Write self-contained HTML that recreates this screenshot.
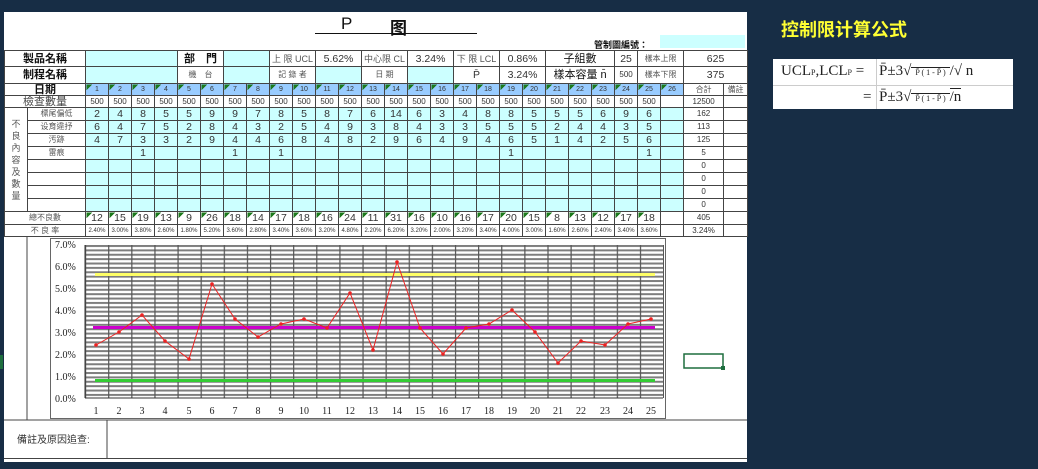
<!DOCTYPE html>
<html><head><meta charset="utf-8">
<style>
*{margin:0;padding:0;box-sizing:border-box}
body{width:1038px;height:469px;background:#172d45;position:relative;overflow:hidden;font-family:"Liberation Sans","Noto Sans CJK TC",sans-serif;color:#222}
#sheet{position:absolute;left:4px;top:12px;width:743px;height:450px;background:#fff}
table{position:absolute;left:4px;top:50px;border-collapse:collapse;table-layout:fixed;width:743px}
td{border:1px solid #444;text-align:center;font-size:10.5px;line-height:10px;padding:0;overflow:hidden;white-space:nowrap;color:#333}
.c{background:#ccffff}
.b{background:#99ccff;font-size:7px}
.h{font-weight:bold;font-size:11px;color:#111}
.s{font-size:8px;color:#555}
.p{font-size:6px}
.t{background-image:linear-gradient(135deg,#1d7a1d 4px,transparent 4px)}
.b.t{background-color:#99ccff}
tr.r16 td{height:16px}
tr.r17 td{height:17px}
tr.r12 td{height:12px}
tr.r13 td{height:13px}
.v{font-size:9px;line-height:12px;white-space:normal;color:#555}
</style></head><body>
<div id="sheet"></div>
<div style="position:absolute;left:341px;top:14px;font-size:17px;color:#111">P</div>
<div style="position:absolute;left:390px;top:14px;font-size:17px;font-weight:bold;color:#111">图</div>
<div style="position:absolute;left:315px;top:33px;width:162px;height:1px;background:#111"></div>
<div style="position:absolute;left:594px;top:38px;font-size:9px;font-weight:bold;color:#111">管制圖編號：</div>
<div style="position:absolute;left:660px;top:35px;width:85px;height:13px;background:#ccffff"></div>

<table>
<colgroup><col style="width:23px"><col style="width:58px">
<col span="26" style="width:23px"><col style="width:40px"><col style="width:24px"></colgroup>
<tr class="r16"><td colspan="2" class="h">製品名稱</td><td colspan="4" class="c"></td><td colspan="2" class="h">部　門</td><td colspan="2" class="c"></td><td colspan="2" class="s" style="font-size:9px">上 限 UCL</td><td colspan="2">5.62%</td><td colspan="2" class="s" style="font-size:9px">中心限 CL</td><td colspan="2">3.24%</td><td colspan="2" class="s" style="font-size:9px">下 限 LCL</td><td colspan="2">0.86%</td><td colspan="3" style="font-size:11px;color:#111">子組數</td><td>25</td><td colspan="2" class="s">樣本上限</td><td colspan="2">625</td></tr>
<tr class="r17"><td colspan="2" class="h">制程名稱</td><td colspan="4" class="c"></td><td colspan="2" class="s">機　台</td><td colspan="2" class="c"></td><td colspan="2" class="s">記 錄 者</td><td colspan="2" class="c"></td><td colspan="2" class="s">日 期</td><td colspan="2" class="c"></td><td colspan="2">P̄</td><td colspan="2">3.24%</td><td colspan="3" style="font-size:11px;color:#111">樣本容量 n̄</td><td style="font-size:8px">500</td><td colspan="2" class="s">樣本下限</td><td colspan="2">375</td></tr>
<tr class="r12"><td colspan="2" class="h">日期</td><td class="b t">1</td><td class="b t">2</td><td class="b t">3</td><td class="b t">4</td><td class="b t">5</td><td class="b t">6</td><td class="b t">7</td><td class="b t">8</td><td class="b t">9</td><td class="b t">10</td><td class="b t">11</td><td class="b t">12</td><td class="b t">13</td><td class="b t">14</td><td class="b t">15</td><td class="b t">16</td><td class="b t">17</td><td class="b t">18</td><td class="b t">19</td><td class="b t">20</td><td class="b t">21</td><td class="b t">22</td><td class="b t">23</td><td class="b t">24</td><td class="b t">25</td><td class="b t">26</td><td class="s">合計</td><td class="s">備註</td></tr>
<tr class="r12"><td colspan="2" style="font-size:11px;color:#444">檢查數量</td><td style="font-size:8px">500</td><td style="font-size:8px">500</td><td style="font-size:8px">500</td><td style="font-size:8px">500</td><td style="font-size:8px">500</td><td style="font-size:8px">500</td><td style="font-size:8px">500</td><td style="font-size:8px">500</td><td style="font-size:8px">500</td><td style="font-size:8px">500</td><td style="font-size:8px">500</td><td style="font-size:8px">500</td><td style="font-size:8px">500</td><td style="font-size:8px">500</td><td style="font-size:8px">500</td><td style="font-size:8px">500</td><td style="font-size:8px">500</td><td style="font-size:8px">500</td><td style="font-size:8px">500</td><td style="font-size:8px">500</td><td style="font-size:8px">500</td><td style="font-size:8px">500</td><td style="font-size:8px">500</td><td style="font-size:8px">500</td><td style="font-size:8px">500</td><td></td><td style="font-size:8px">12500</td><td></td></tr>
<tr class="r13"><td rowspan="8" class="v">不<br>良<br>內<br>容<br>及<br>數<br>量</td><td class="s">標尾偏低</td><td class="c">2</td><td class="c">4</td><td class="c">8</td><td class="c">5</td><td class="c">5</td><td class="c">9</td><td class="c">9</td><td class="c">7</td><td class="c">8</td><td class="c">5</td><td class="c">8</td><td class="c">7</td><td class="c">6</td><td class="c">14</td><td class="c">6</td><td class="c">3</td><td class="c">4</td><td class="c">8</td><td class="c">8</td><td class="c">5</td><td class="c">5</td><td class="c">5</td><td class="c">6</td><td class="c">9</td><td class="c">6</td><td class="c"></td><td style="font-size:8px">162</td><td></td></tr>
<tr class="r13"><td class="s">设育違抒</td><td class="c">6</td><td class="c">4</td><td class="c">7</td><td class="c">5</td><td class="c">2</td><td class="c">8</td><td class="c">4</td><td class="c">3</td><td class="c">2</td><td class="c">5</td><td class="c">4</td><td class="c">9</td><td class="c">3</td><td class="c">8</td><td class="c">4</td><td class="c">3</td><td class="c">3</td><td class="c">5</td><td class="c">5</td><td class="c">5</td><td class="c">2</td><td class="c">4</td><td class="c">4</td><td class="c">3</td><td class="c">5</td><td class="c"></td><td style="font-size:8px">113</td><td></td></tr>
<tr class="r13"><td class="s">汚跡</td><td class="c">4</td><td class="c">7</td><td class="c">3</td><td class="c">3</td><td class="c">2</td><td class="c">9</td><td class="c">4</td><td class="c">4</td><td class="c">6</td><td class="c">8</td><td class="c">4</td><td class="c">8</td><td class="c">2</td><td class="c">9</td><td class="c">6</td><td class="c">4</td><td class="c">9</td><td class="c">4</td><td class="c">6</td><td class="c">5</td><td class="c">1</td><td class="c">4</td><td class="c">2</td><td class="c">5</td><td class="c">6</td><td class="c"></td><td style="font-size:8px">125</td><td></td></tr>
<tr class="r13"><td class="s">雷痕</td><td class="c"></td><td class="c"></td><td class="c">1</td><td class="c"></td><td class="c"></td><td class="c"></td><td class="c">1</td><td class="c"></td><td class="c">1</td><td class="c"></td><td class="c"></td><td class="c"></td><td class="c"></td><td class="c"></td><td class="c"></td><td class="c"></td><td class="c"></td><td class="c"></td><td class="c">1</td><td class="c"></td><td class="c"></td><td class="c"></td><td class="c"></td><td class="c"></td><td class="c">1</td><td class="c"></td><td style="font-size:8px">5</td><td></td></tr>
<tr class="r13"><td></td><td class="c"></td><td class="c"></td><td class="c"></td><td class="c"></td><td class="c"></td><td class="c"></td><td class="c"></td><td class="c"></td><td class="c"></td><td class="c"></td><td class="c"></td><td class="c"></td><td class="c"></td><td class="c"></td><td class="c"></td><td class="c"></td><td class="c"></td><td class="c"></td><td class="c"></td><td class="c"></td><td class="c"></td><td class="c"></td><td class="c"></td><td class="c"></td><td class="c"></td><td class="c"></td><td style="font-size:8px">0</td><td></td></tr>
<tr class="r13"><td></td><td class="c"></td><td class="c"></td><td class="c"></td><td class="c"></td><td class="c"></td><td class="c"></td><td class="c"></td><td class="c"></td><td class="c"></td><td class="c"></td><td class="c"></td><td class="c"></td><td class="c"></td><td class="c"></td><td class="c"></td><td class="c"></td><td class="c"></td><td class="c"></td><td class="c"></td><td class="c"></td><td class="c"></td><td class="c"></td><td class="c"></td><td class="c"></td><td class="c"></td><td class="c"></td><td style="font-size:8px">0</td><td></td></tr>
<tr class="r13"><td></td><td class="c"></td><td class="c"></td><td class="c"></td><td class="c"></td><td class="c"></td><td class="c"></td><td class="c"></td><td class="c"></td><td class="c"></td><td class="c"></td><td class="c"></td><td class="c"></td><td class="c"></td><td class="c"></td><td class="c"></td><td class="c"></td><td class="c"></td><td class="c"></td><td class="c"></td><td class="c"></td><td class="c"></td><td class="c"></td><td class="c"></td><td class="c"></td><td class="c"></td><td class="c"></td><td style="font-size:8px">0</td><td></td></tr>
<tr class="r13"><td></td><td class="c"></td><td class="c"></td><td class="c"></td><td class="c"></td><td class="c"></td><td class="c"></td><td class="c"></td><td class="c"></td><td class="c"></td><td class="c"></td><td class="c"></td><td class="c"></td><td class="c"></td><td class="c"></td><td class="c"></td><td class="c"></td><td class="c"></td><td class="c"></td><td class="c"></td><td class="c"></td><td class="c"></td><td class="c"></td><td class="c"></td><td class="c"></td><td class="c"></td><td class="c"></td><td style="font-size:8px">0</td><td></td></tr>
<tr class="r13"><td colspan="2" class="s">總不良數</td><td class="t">12</td><td class="t">15</td><td class="t">19</td><td class="t">13</td><td class="t">9</td><td class="t">26</td><td class="t">18</td><td class="t">14</td><td class="t">17</td><td class="t">18</td><td class="t">16</td><td class="t">24</td><td class="t">11</td><td class="t">31</td><td class="t">16</td><td class="t">10</td><td class="t">16</td><td class="t">17</td><td class="t">20</td><td class="t">15</td><td class="t">8</td><td class="t">13</td><td class="t">12</td><td class="t">17</td><td class="t">18</td><td></td><td style="font-size:8px">405</td><td></td></tr>
<tr class="r12"><td colspan="2" class="s">不 良 率</td><td class="p">2.40%</td><td class="p">3.00%</td><td class="p">3.80%</td><td class="p">2.60%</td><td class="p">1.80%</td><td class="p">5.20%</td><td class="p">3.60%</td><td class="p">2.80%</td><td class="p">3.40%</td><td class="p">3.60%</td><td class="p">3.20%</td><td class="p">4.80%</td><td class="p">2.20%</td><td class="p">6.20%</td><td class="p">3.20%</td><td class="p">2.00%</td><td class="p">3.20%</td><td class="p">3.40%</td><td class="p">4.00%</td><td class="p">3.00%</td><td class="p">1.60%</td><td class="p">2.60%</td><td class="p">2.40%</td><td class="p">3.40%</td><td class="p">3.60%</td><td></td><td style="font-size:8px">3.24%</td><td></td></tr>
</table>

<svg style="position:absolute;left:0;top:0" width="1038" height="469" viewBox="0 0 1038 469">
<defs>
<pattern id="hg" x="0" y="245" width="10" height="4.38" patternUnits="userSpaceOnUse"><rect x="0" y="0" width="10" height="2" fill="#7e7e7e"/></pattern>
<pattern id="vg" x="85" y="0" width="23.12" height="10" patternUnits="userSpaceOnUse"><rect x="0" y="0" width="1.2" height="10" fill="#555"/></pattern>
</defs>
<line x1="27" y1="237" x2="27" y2="420" stroke="#444"/>
<rect x="50.5" y="238.5" width="615" height="180" fill="#fff" stroke="#666"/>
<rect x="85" y="245" width="578" height="153" fill="url(#hg)"/>
<rect x="85" y="245" width="579" height="153" fill="url(#vg)"/>
<line x1="85" y1="398" x2="663" y2="398" stroke="#333"/>
<line x1="85" y1="245" x2="85" y2="398" stroke="#333"/>
<g font-family="Liberation Serif,serif" font-size="10" fill="#222">
<text x="55" y="248">7.0%</text><text x="55" y="270">6.0%</text><text x="55" y="292">5.0%</text><text x="55" y="314">4.0%</text><text x="55" y="336">3.0%</text><text x="55" y="358">2.0%</text><text x="55" y="380">1.0%</text><text x="55" y="402">0.0%</text>
</g>
<g font-family="Liberation Serif,serif" font-size="10" fill="#222" text-anchor="middle">
<text x="96" y="414">1</text><text x="119" y="414">2</text><text x="142" y="414">3</text><text x="165" y="414">4</text><text x="189" y="414">5</text><text x="212" y="414">6</text><text x="235" y="414">7</text><text x="258" y="414">8</text><text x="281" y="414">9</text><text x="304" y="414">10</text><text x="327" y="414">11</text><text x="350" y="414">12</text><text x="373" y="414">13</text><text x="397" y="414">14</text><text x="420" y="414">15</text><text x="443" y="414">16</text><text x="466" y="414">17</text><text x="489" y="414">18</text><text x="512" y="414">19</text><text x="535" y="414">20</text><text x="558" y="414">21</text><text x="581" y="414">22</text><text x="605" y="414">23</text><text x="628" y="414">24</text><text x="651" y="414">25</text>
</g>
<rect x="95" y="273" width="560" height="3" fill="#ffff66"/>
<rect x="93" y="326" width="562" height="3" fill="#cc00cc"/>
<rect x="95" y="379" width="560" height="3" fill="#33cc33"/>
<polyline fill="none" stroke="#ee2222" stroke-width="1" points="96,345 119,332 142,315 165,341 189,359 212,284 235,319 258,337 281,324 304,319 327,328 350,293 373,350 397,262 420,328 443,354 466,328 489,324 512,310 535,332 558,363 581,341 605,345 628,324 651,319"/>
<g fill="#ee2222">
<circle cx="96" cy="345" r="1.8"/><circle cx="119" cy="332" r="1.8"/><circle cx="142" cy="315" r="1.8"/><circle cx="165" cy="341" r="1.8"/><circle cx="189" cy="359" r="1.8"/><circle cx="212" cy="284" r="1.8"/><circle cx="235" cy="319" r="1.8"/><circle cx="258" cy="337" r="1.8"/><circle cx="281" cy="324" r="1.8"/><circle cx="304" cy="319" r="1.8"/><circle cx="327" cy="328" r="1.8"/><circle cx="350" cy="293" r="1.8"/><circle cx="373" cy="350" r="1.8"/><circle cx="397" cy="262" r="1.8"/><circle cx="420" cy="328" r="1.8"/><circle cx="443" cy="354" r="1.8"/><circle cx="466" cy="328" r="1.8"/><circle cx="489" cy="324" r="1.8"/><circle cx="512" cy="310" r="1.8"/><circle cx="535" cy="332" r="1.8"/><circle cx="558" cy="363" r="1.8"/><circle cx="581" cy="341" r="1.8"/><circle cx="605" cy="345" r="1.8"/><circle cx="628" cy="324" r="1.8"/><circle cx="651" cy="319" r="1.8"/>
</g>
<rect x="684" y="354" width="39" height="14" fill="none" stroke="#1e6e3e" stroke-width="1.5"/>
<rect x="721" y="366" width="4" height="4" fill="#1e6e3e"/>
<line x1="4" y1="420" x2="747" y2="420" stroke="#444"/>
<line x1="107" y1="420" x2="107" y2="458" stroke="#444"/>
<line x1="4" y1="458.5" x2="747" y2="458.5" stroke="#444"/>
<text x="17" y="443" font-size="10" fill="#333" font-family="Liberation Sans,Noto Sans CJK TC,sans-serif">備註及原因追查:</text>
<rect x="0" y="355" width="3" height="14" fill="#1e6e3e"/>
</svg>

<div style="position:absolute;left:781px;top:17px;font-size:18px;font-weight:bold;color:#ffff33;font-family:'Noto Sans CJK SC',sans-serif;line-height:24px">控制限计算公式</div>
<div style="position:absolute;left:773px;top:59px;width:240px;height:50px;background:#fff;font-family:'Liberation Serif',serif;color:#222">
<div style="position:absolute;left:103px;top:0;width:1px;height:50px;background:#ccc"></div>
<div style="position:absolute;left:0;top:26px;width:240px;height:1px;background:#ccc"></div>
<div style="position:absolute;left:8px;top:4px;font-size:15px">UCL<span style="font-size:8px">P</span>,LCL<span style="font-size:8px">P</span> =</div>
<div style="position:absolute;left:106px;top:4px;font-size:15px;white-space:nowrap">P̄±3√<span style="font-size:8px;border-top:1px solid #222;padding:0 2px"> P̄ ( 1 - P̄ ) </span>/√ n</div>
<div style="position:absolute;left:90px;top:30px;font-size:15px">=</div>
<div style="position:absolute;left:106px;top:30px;font-size:15px;white-space:nowrap">P̄±3√<span style="font-size:8px;border-top:1px solid #222;padding:0 2px"> P̄ ( 1 - P̄ ) </span><span style="border-top:1px solid #222">/n</span></div>
</div>
</body></html>
